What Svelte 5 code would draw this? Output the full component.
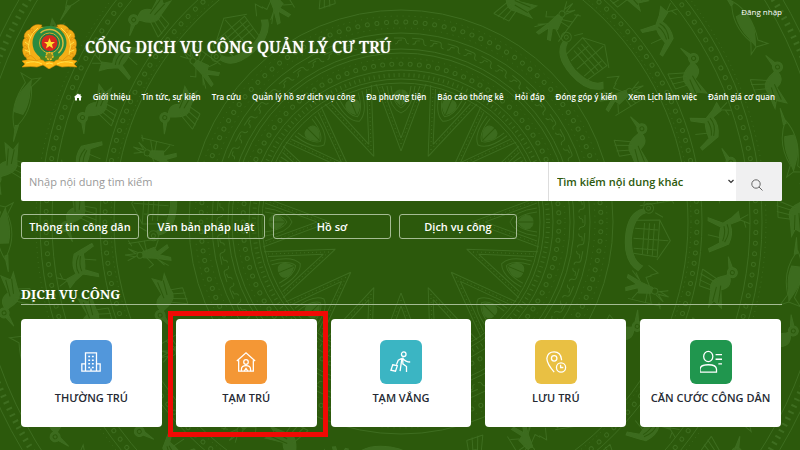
<script lang="ts">
	type Service = { label: string; icon: string; marked?: boolean };

	const menu = [
		'Giới thiệu',
		'Tin tức, sự kiện',
		'Tra cứu',
		'Quản lý hồ sơ dịch vụ công',
		'Đa phương tiện',
		'Báo cáo thống kê',
		'Hỏi đáp',
		'Đóng góp ý kiến',
		'Xem Lịch làm việc',
		'Đánh giá cơ quan'
	];

	const shortcuts = ['Thông tin công dân', 'Văn bản pháp luật', 'Hồ sơ', 'Dịch vụ công'];

	const services: Service[] = [
		{ label: 'THƯỜNG TRÚ', icon: 'building' },
		{ label: 'TẠM TRÚ', icon: 'house', marked: true },
		{ label: 'TẠM VẮNG', icon: 'travel' },
		{ label: 'LƯU TRÚ', icon: 'pin' },
		{ label: 'CĂN CƯỚC CÔNG DÂN', icon: 'identity' }
	];

	let query = $state('');

	// n evenly spaced angles, starting at an offset
	function angles(n: number, offset = 0): number[] {
		return Array.from({ length: n }, (_, i) => offset + (i * 360) / n);
	}
</script>

<div class="page">
	<!-- bronze drum pattern -->
	<svg class="drum" viewBox="0 0 800 450" preserveAspectRatio="xMidYMid slice" aria-hidden="true">
		<defs>
			<g id="ray">
				<path d="M0 71L-25 138M0 71L25 138M0 84L-19 136M0 84L19 136" />
				<path d="M0 78L-22 137M0 78L22 137" stroke-dasharray="1 3" />
				<path d="M-14 136Q-11 113 0 109Q11 113 14 136M-10 136Q-8 118 0 114Q8 118 10 136" />
				<path d="M0 116C-11 125-7 132 0 132C7 132 11 125 0 116Z" class="fill" />
				<path d="M0 116V133" class="cut" />
			</g>
			<g id="rope">
				<path d="M-7-3H2Q5-3 5 0Q5 3 8 3M-6 3Q-3 3-3 0Q-3-1 1-1" />
			</g>
			<g id="warrior">
				<circle cx="0" cy="-15" r="3" />
				<path d="M-3-12L3-12L6 0L1 2L7 13L4 14L-2 4L-6 15L-9 15L-5 0Z" class="fill" />
				<path d="M2-10L13-15M2-8L14-9M-3-9L-11-3L-14-8M0-18L-4-28L-1-20L2-30L2-19L8-26L3-17" />
				<path d="M13-25L14 9M10-22L16-25M-5 1L-13 8M-7 3L-14 12M5 1L13 5" />
			</g>
			<g id="bird">
				<circle cx="-12" cy="-10" r="5" class="fill" />
				<circle cx="-12" cy="-10" r="2" class="cut" />
				<path d="M-17-9L-27-3L-15-6ZM-10-7Q2-14 7-2L25-6L19 3L26 7L9 8Q-2 12-8-4Z" class="fill" />
				<path d="M-2 2L-10 20M1 4L-5 21M5 6L1 21M9 7L7 20M-10 20L7 20" />
				<path d="M3-1L20-2M5 3L20 4" class="cut" />
			</g>
			<g id="deer">
				<path d="M-18-12L-9-14L-5-4Q4-8 15-3L18 4L23 16L20 17L14 6Q4 7-2 5L-8 18L-11 18L-6 3L-12-6Z" class="fill" />
				<path d="M-10-13L-15-22M-10-13L-6-24M-8-18L-2-20M9 4L6 18" />
				<path d="M-5-1Q3-5 13 1M-3 2Q4 0 12 3" class="cut" />
			</g>
			<g id="boat">
				<path d="M-26 5Q-22 16 0 17Q22 16 27 4L32 8Q24 23 0 23Q-26 23-30 7Z" class="fill" />
				<path d="M-18 14L-20-10L17-10L15 14M-20-10L0-22L20-10M-16-5H16M-16 0H15M-16 5H15M-10-9V14M0-20V15M10-9V14" />
				<circle cx="-31" cy="2" r="5" />
				<circle cx="-31" cy="2" r="2" />
				<path d="M-23-13L-27-5M26-2L33-12L36-4" />
			</g>
		</defs>

		<g transform="translate(401 222)" class="ink">
			{#each angles(16) as a}
				<use href="#ray" transform="rotate({a})" />
			{/each}
			<circle r="139" />
			<circle r="143" />
			<circle r="147" stroke-width="4" stroke-dasharray="1 4" />
			<circle r="152" />
			{#each angles(108) as a}
				<circle cx="158" r="2" transform="rotate({a})" />
			{/each}
			<circle r="164" stroke-dasharray="1 5" />
			<circle r="169" />
			<circle r="173" />
			{#each angles(64) as a}
				<use href="#rope" transform="rotate({a}) translate(0 -181)" />
			{/each}
			<circle r="189" />
			<circle r="194" stroke-dasharray="1 5" />
			{#each angles(130) as a}
				<circle cx="200" r="2" transform="rotate({a})" />
			{/each}
			<circle r="206" stroke-dasharray="1 5" />
			<circle r="212" />

			{#each angles(32, 4) as a, i}
				<use href={i % 4 === 0 ? '#boat' : i % 4 === 2 ? '#bird' : '#warrior'} transform="rotate({a}) translate(0 -248)" />
			{/each}

			<circle r="287" />
			<circle r="290" stroke-dasharray="1 4" />
			{#each angles(180) as a}
				<circle cx="296" r="2" transform="rotate({a})" />
			{/each}
			<circle r="301" />

			{#each angles(38, 6) as a, i}
				<use href={i % 2 ? '#deer' : '#bird'} transform="rotate({a}) translate(0 -325)" />
			{/each}

			<circle r="349" />
			{#each angles(210) as a}
				<circle cx="355" r="2" transform="rotate({a})" />
			{/each}
			<circle r="361" />
			<circle r="365" stroke-dasharray="1 4" />

			{#each angles(38, 3) as a, i}
				<g transform="rotate({a}) translate(0 -397)">
					{#if i % 2}
						<use href="#bird" />
					{:else}
						<path d="M-25 0Q-5-12 22-3L30-10L27 2L31 10L20 4Q-4 13-25 0Z" />
						<path d="M-9-5Q5-9 18-2L26 2L15 4Q2 7-9 4ZM-22 0L-38 3L-21 3Z" class="fill" />
					{/if}
				</g>
			{/each}
			<circle r="426" />
			<circle r="434" stroke-width="6" stroke-dasharray="2 5" />
			<circle r="442" />
		</g>
	</svg>

	<header>
		<div class="account"><a href="#login">Đăng nhập</a></div>
		<a class="brand" href="#top">
			<svg class="emblem" viewBox="0 0 57 45" aria-hidden="true">
				<g fill="#f3ae16" stroke="#c97908" stroke-width=".4">
					<path d="M18 3Q8 8 6 18Q4 30 12 38H45Q53 30 51 18Q49 8 39 3Z" />
					<path d="M21 1Q13-1 9 5Q10 10 13 9Q19 7 21 1M12 5Q4 5 3 13Q6 18 9 15Q13 11 12 5M6 13Q0 15 2 23Q6 27 8 23Q10 17 6 13M4 21Q-1 26 4 33Q9 34 9 30Q8 24 4 21M5 29Q3 37 13 40Q17 37 13 34Q9 30 5 29" />
					<path d="M36 1Q44-1 48 5Q47 10 44 9Q38 7 36 1M45 5Q53 5 54 13Q51 18 48 15Q44 11 45 5M51 13Q57 15 55 23Q51 27 49 23Q47 17 51 13M53 21Q58 26 53 33Q48 34 48 30Q49 24 53 21M52 29Q54 37 44 40Q40 37 44 34Q48 30 52 29" />
				</g>
				<g fill="none" stroke="#ffe14a" stroke-width="1">
					<path d="M17 4Q4 14 9 31M40 4Q53 14 48 31M7 10L10 14M4 18L8 21M4 26L9 28M50 10L47 14M53 18L49 21M53 26L48 28" />
				</g>
				<circle cx="28.500" cy="19" r="17" fill="#2b8a3f" />
				<circle cx="28.500" cy="19" r="13.500" fill="none" stroke="#d9bb3c" stroke-width="1.500" stroke-dasharray="22 42 22 0" transform="rotate(-45 28.500 19)" />
				<circle cx="28.500" cy="19" r="10" fill="#187e42" stroke="#d1aa2d" />
				<path d="M18 31Q28 36 39 31L36 39Q28 42 21 39Z" fill="#4a851f" />
				<circle cx="28.500" cy="19" r="8" fill="#d8291d" />
				<path d="M28.500 14L30 18H34L31 20.500L32 24.500L28.500 22L25 24.500L26 20.500L23 18H27Z" fill="#ffdf2f" />
				<circle cx="28.500" cy="32" r="3.500" fill="#8a8d1e" stroke="#f6bd20" stroke-width="1.500" stroke-dasharray="2 1" />
				<path d="M1 37Q8 34 15 37Q21 34 24 38Q28 36 33 38Q36 34 42 37Q49 34 56 37L53 40L56 43Q46 42 41 43L35 41L28 45L22 41L16 43Q11 42 1 43L4 40Z" fill="#ffb915" stroke="#d5890a" stroke-width=".6" />
				<path d="M5 39Q14 36 21 40M52 39Q43 36 36 40M25 40Q28 38 32 40" fill="none" stroke="#ffe14a" />
			</svg>
			<h1>CỔNG DỊCH VỤ CÔNG QUẢN LÝ CƯ TRÚ</h1>
		</a>
		<nav>
			<a class="start" href="#top" aria-label="Trang chủ">
				<svg viewBox="0 0 16 16" aria-hidden="true">
					<path d="M8 1L0 8L2 9V15H6V10H10V15H14V9L16 8L13 5V2H11V4Z" fill="#fff" />
				</svg>
			</a>
			{#each menu as item}
				<a href="#menu">{item}</a>
			{/each}
		</nav>
	</header>

	<main>
		<form class="search" onsubmit={(e) => e.preventDefault()}>
			<input type="text" placeholder="Nhập nội dung tìm kiếm" aria-label="Nhập nội dung tìm kiếm" bind:value={query} />
			<div class="scope">
				<select aria-label="Tìm kiếm nội dung khác">
					<option>Tìm kiếm nội dung khác</option>
				</select>
				<svg viewBox="0 0 8 8" aria-hidden="true">
					<path d="M1.500 3L4 5.500L6.500 3" fill="none" stroke="#333" stroke-width="1.200" />
				</svg>
			</div>
			<button type="submit" aria-label="Tìm kiếm">
				<svg viewBox="0 0 12 12" fill="none" stroke="#666" aria-hidden="true">
					<circle cx="5" cy="5" r="4.200" />
					<path d="M8 8L11.500 11.500" />
				</svg>
			</button>
		</form>

		<div class="shortcuts">
			{#each shortcuts as item}
				<button type="button">{item}</button>
			{/each}
		</div>

		<section>
			<h2>DỊCH VỤ CÔNG</h2>
			<div class="cards">
				{#each services as service}
					<a class="card" class:marked={service.marked} href="#service">
						<span class="tile {service.icon}">
							<svg viewBox="0 0 24 24" aria-hidden="true">
								{#if service.icon === 'building'}
									<path d="M6 22V2H18V22M6 14H2V22H22V14H18M12 22V19" />
									<path d="M9 6H11M13 6H15M9 10H11M13 10H15M9 14H11M13 14H15M9 18H11M13 18H15" stroke-width="1.600" />
								{:else if service.icon === 'house'}
									<path d="M2 11L12 2L22 11M4 10V22H20V10" />
									<circle cx="12" cy="12" r="2.500" />
									<path d="M7 22V20Q7 16 12 16Q17 16 17 20V22M10 22L12 19L14 22" />
								{:else if service.icon === 'travel'}
									<circle cx="15" cy="3.500" r="2.500" />
									<path d="M14 7V14L18 17V23M14 8Q17 12 22 12M13 8L11 22M13 8L9 10L7 15" />
									<path d="M3 15L8 16L6 22L1 21Z" />
								{:else if service.icon === 'pin'}
									<path d="M10 23Q2 14 2 8Q3 1 10 1Q17 1 18 9V10" />
									<circle cx="10" cy="8" r="3" />
									<circle cx="17.500" cy="18" r="5" />
									<path d="M17 15V18H20" />
								{:else}
									<ellipse cx="9" cy="6" rx="5" ry="5.500" />
									<path d="M0 23V20Q0 15 9 15Q18 15 18 20V23ZM17 4H24M17 9H24M20 14H24" />
								{/if}
							</svg>
						</span>
						<span>{service.label}</span>
					</a>
				{/each}
			</div>
		</section>
	</main>
</div>

<style>
	:global(body) {
		background: #2c590c;
	}

	.page {
		position: relative;
		box-sizing: border-box;
		min-height: 100vh;
		padding: 6px 18px 22px 21px;
		overflow: hidden;
		background: #2c590c;
		color: #fff;
		font-family: 'Open Sans', 'Noto Sans', sans-serif;
		font-size: 11px;
		line-height: 16px;
	}

	.drum {
		position: absolute;
		inset: 0;
		width: 100%;
		height: 100%;
	}

	.ink {
		fill: none;
		stroke: #3e6d20;
		stroke-width: 1;
	}

	.drum .fill {
		fill: #3c6b1e;
	}

	.drum .cut {
		stroke: #2c590c;
	}

	header,
	main {
		position: relative;
	}

	a {
		color: inherit;
		text-decoration: none;
	}

	button,
	input,
	select {
		margin: 0;
		border: 0;
		font: inherit;
	}

	.account {
		display: flex;
		justify-content: flex-end;
		height: 18px;
		font-size: 8px;
		line-height: 12px;
	}

	.brand {
		display: flex;
		align-items: center;
		gap: 7px;
		width: fit-content;
	}

	.emblem {
		width: 57px;
		height: 45px;
	}

	h1,
	h2 {
		margin: 0;
		font-family: 'Noto Serif', 'Liberation Serif', serif;
	}

	h1 {
		font-size: 16px;
		font-weight: 500;
		line-height: 24px;
		text-shadow: 0 0 1px #fff;
	}

	nav {
		display: flex;
		align-items: center;
		justify-content: flex-end;
		gap: 11px;
		margin: 17px 7px 0 0;
		font-size: 8px;
		font-weight: 600;
		line-height: 22px;
		white-space: nowrap;
	}

	.start {
		display: flex;
		align-items: center;
		height: 22px;
	}

	.start svg {
		width: 8px;
		height: 8px;
	}

	.search {
		display: flex;
		height: 39px;
		margin-top: 54px;
		overflow: hidden;
		border-radius: 2px;
		background: #fff;
	}

	.search input {
		flex: 1;
		min-width: 0;
		padding: 0 8px;
		background: transparent;
		color: #333;
	}

	.search input::placeholder {
		color: #999;
	}

	.scope {
		position: relative;
		flex: 0 0 188px;
	}

	.scope select {
		width: 100%;
		height: 100%;
		padding: 0 8px;
		appearance: none;
		border-left: 1px solid #ddd;
		background: transparent;
		color: #2c590c;
		font-weight: 600;
	}

	.scope svg {
		position: absolute;
		top: 15px;
		right: 1px;
		width: 8px;
		height: 8px;
		pointer-events: none;
	}

	.search button {
		display: flex;
		flex: 0 0 46px;
		align-items: center;
		justify-content: center;
		padding: 6px 4px 0 0;
		background: #f0f0f1;
	}

	.search button svg {
		width: 12px;
		height: 12px;
	}

	.shortcuts {
		display: flex;
		gap: 8px;
		margin-top: 13px;
	}

	.shortcuts button {
		width: 118px;
		height: 25px;
		padding: 0;
		border: 1px solid #a5bc94;
		border-radius: 3px;
		background: transparent;
		color: #fff;
		font-weight: 600;
		white-space: nowrap;
	}

	section {
		margin-top: 46px;
	}

	h2 {
		border-bottom: 1px solid #a5bc94;
		font-size: 13px;
		font-weight: 700;
		line-height: 19px;
	}

	.cards {
		display: grid;
		grid-template-columns: repeat(5, 1fr);
		gap: 14px;
		margin: 14px 1px 0 0;
	}

	.card {
		position: relative;
		display: flex;
		flex-direction: column;
		align-items: center;
		gap: 6px;
		padding: 21px 0;
		border-radius: 4px;
		background: #fff;
		color: #252a33;
		font-weight: 600;
		white-space: nowrap;
	}

	.marked::after {
		position: absolute;
		inset: -8px -11px -10px -8px;
		border: 5px solid #f00a04;
		content: '';
	}

	.tile {
		display: flex;
		align-items: center;
		justify-content: center;
		width: 42px;
		height: 44px;
		border-radius: 6px;
	}

	.tile svg {
		width: 22px;
		height: 24px;
		fill: none;
		stroke: #fff;
		stroke-width: 1.4;
	}

	.building {
		background: #5297db;
	}

	.house {
		background: #f49735;
	}

	.travel {
		background: #3bb5c3;
	}

	.pin {
		background: #e9c043;
	}

	.identity {
		background: #20964e;
	}
</style>
